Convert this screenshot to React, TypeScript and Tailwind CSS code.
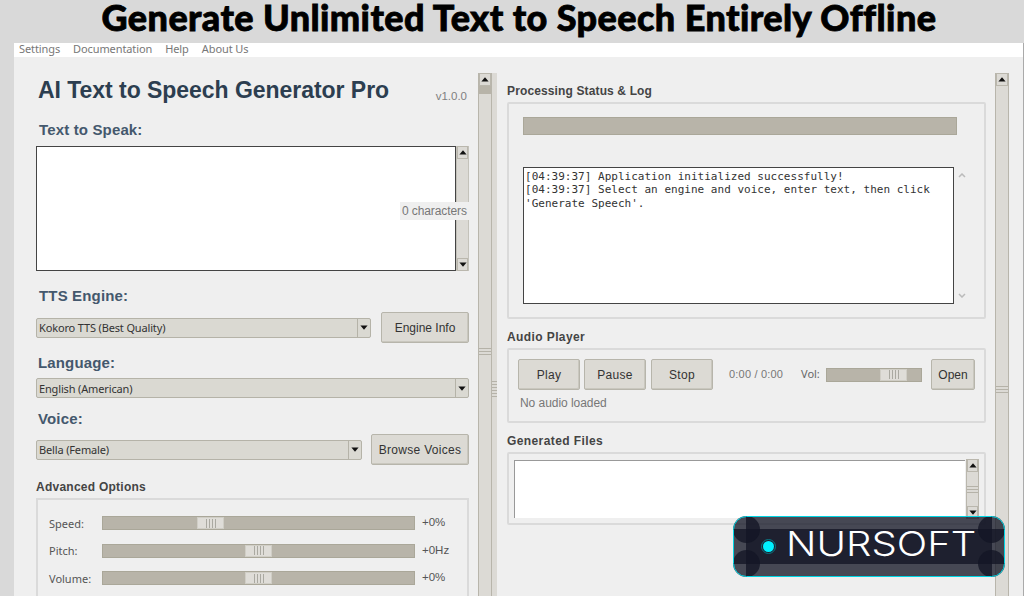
import React from "react";

const ARIAL = "font-['Liberation_Sans',Arial,sans-serif]";
const NOTO = "font-['Noto_Sans','Open_Sans',sans-serif]";

function Arrow({ up = false }: { up?: boolean }) {
  return (
    <svg width="8" height="5" viewBox="0 0 8 5" className={up ? "" : "rotate-180"}>
      <path d="M4 0.3 L7.6 4.5 H0.4 Z" fill="#111" />
    </svg>
  );
}

function ArrowBox({ up = false }: { up?: boolean }) {
  return (
    <div className="flex h-[13px] w-full shrink-0 items-center justify-center border border-[#bab7ad] bg-[#dcdad5]">
      <Arrow up={up} />
    </div>
  );
}

function Grip({ className = "" }: { className?: string }) {
  return (
    <div className={"flex w-full flex-col gap-[2px] " + className}>
      <i className="h-px bg-[#b5b2a8]" />
      <i className="h-px bg-[#b5b2a8]" />
      <i className="h-px bg-[#b5b2a8]" />
    </div>
  );
}

function Combo({ text, className }: { text: string; className: string }) {
  return (
    <div className={"flex h-5 shrink-0 items-stretch rounded-[2px] border border-[#b5b3a8] bg-[#dad9d2] " + className}>
      <div className={"flex flex-1 items-center pl-[2px] text-[11px] leading-none tracking-[-0.15px] whitespace-nowrap text-[#333] " + NOTO}>
        {text}
      </div>
      <div className="flex w-[13px] items-center justify-center border-l border-[#b5b3a8]">
        <Arrow />
      </div>
    </div>
  );
}

function Button({ text, className }: { text: string; className: string }) {
  return (
    <div
      className={
        "flex items-center justify-center rounded-[2px] border border-[#b7b5ab] bg-[#dcdad4] text-[12px] leading-none whitespace-nowrap text-[#333] shadow-[inset_-1px_-1px_0_#c9c7be] " +
        ARIAL + " " + className
      }
    >
      {text}
    </div>
  );
}

function Slider({ className, offset }: { className: string; offset: string }) {
  return (
    <div className={"flex h-[14px] border border-[#aaa799] bg-[#b8b4a9] " + className}>
      <div className={"flex h-3 w-[27px] items-center justify-center gap-[2px] border border-[#d0cec6] bg-[#dfddd8] " + offset}>
        <i className="h-[9px] w-px bg-[#aaa9a1]" />
        <i className="h-[9px] w-px bg-[#aaa9a1]" />
        <i className="h-[9px] w-px bg-[#aaa9a1]" />
        <i className="h-[9px] w-px bg-[#aaa9a1]" />
      </div>
    </div>
  );
}

function Heading({ text, className }: { text: string; className: string }) {
  return (
    <div className={"h-5 shrink-0 text-[15px] leading-5 font-bold tracking-[0.15px] whitespace-nowrap text-[#44586d] " + ARIAL + " " + className}>
      {text}
    </div>
  );
}

function Section({ text, className }: { text: string; className: string }) {
  return <div className={"h-4 shrink-0 text-[12px] leading-4 font-bold whitespace-nowrap text-[#444] " + ARIAL + " " + className}>{text}</div>;
}

function Option({ label, value, offset }: { label: string; value: string; offset: string }) {
  return (
    <div className={"flex h-[14px] shrink-0 items-center text-[11px] leading-none text-[#555] " + NOTO}>
      <span className="w-[53px]">{label}</span>
      <Slider className="w-[313px]" offset={offset} />
      <span className={"ml-[7px] text-[11.5px] " + ARIAL}>{value}</span>
    </div>
  );
}

function Brand() {
  return (
    <div className="absolute top-[516px] left-[733px] h-[61px] w-[272px]">
      <svg width="272" height="61" viewBox="0 0 272 61" className="absolute inset-0">
        <g fill="#121525" fillOpacity="0.77">
          <rect x="13" width="246" height="61" />
          <rect y="13" width="272" height="35" />
          <circle cx="13.5" cy="13.5" r="13.5" />
          <circle cx="13.5" cy="47.5" r="13.5" />
          <circle cx="258.5" cy="13.5" r="13.5" />
          <circle cx="258.5" cy="47.5" r="13.5" />
        </g>
        <rect x="0.5" y="0.5" width="271" height="60" rx="13" fill="none" stroke="#00d5e4" />
        <circle cx="35.5" cy="30.5" r="7" fill="none" stroke="#0b7784" />
        <circle cx="35.5" cy="30.5" r="5.5" fill="#00f0ff" />
      </svg>
      <span className="absolute top-[9px] left-[53px] origin-left scale-x-[1.18] font-['Inter',sans-serif] text-[34px] leading-[38px] font-light whitespace-nowrap text-white">
        NURSOFT
      </span>
    </div>
  );
}

function LeftPane() {
  return (
    <div className="flex w-[464px] shrink-0 flex-col overflow-hidden pl-[22px]">
      <div className="mt-[16px] flex h-[34px] shrink-0 items-center justify-between pr-[11px] pl-[2px]">
        <h1 className={"text-[23px] leading-none font-bold tracking-[-0.04px] whitespace-nowrap text-[#2c3e50] " + ARIAL}>
          AI Text to Speech Generator Pro
        </h1>
        <span className={"mt-[14px] text-[11.5px] text-[#7f7f7f] " + ARIAL}>v1.0.0</span>
      </div>
      <Heading text="Text to Speak:" className="mt-[13px] ml-[3px]" />
      <div className="relative mt-[6px] flex h-[125px] w-[433px] shrink-0">
        <div className="w-[420px] border border-[#444] bg-white" />
        <div className="flex flex-1 flex-col justify-between border-x border-[#c4c2ba] bg-[#dcdad5]">
          <ArrowBox up />
          <ArrowBox />
        </div>
        <span className={"absolute top-[56px] right-0 h-[18px] w-[69px] bg-[#efefef] pl-[2px] text-[12px] leading-[18px] tracking-[-0.1px] whitespace-nowrap text-[#777] " + ARIAL}>
          0 characters
        </span>
      </div>
      <Heading text="TTS Engine:" className="mt-[15px] ml-[3px]" />
      <div className="mt-[6px] flex h-[31px] w-[433px] shrink-0 items-center justify-between">
        <Combo text="Kokoro TTS (Best Quality)" className="w-[335px]" />
        <Button text="Engine Info" className="h-[31px] w-[88px]" />
      </div>
      <Heading text="Language:" className="mt-[10px] ml-[2px]" />
      <Combo text="English (American)" className="mt-[5px] w-[433px]" />
      <Heading text="Voice:" className="mt-[11px] ml-[2px]" />
      <div className="mt-[5px] flex h-[31px] w-[433px] shrink-0 items-center justify-between">
        <Combo text="Bella (Female)" className="w-[326px]" />
        <Button text="Browse Voices" className="h-[31px] w-[98px] tracking-[0.3px]" />
      </div>
      <Section text="Advanced Options" className="mt-[14px] tracking-[0.25px]" />
      <div className="mt-[3px] flex h-[120px] w-[433px] shrink-0 flex-col gap-[13.5px] border-2 border-[#dadada] pt-[16px] pl-[11px]">
        <Option label="Speed:" value="+0%" offset="ml-[94px]" />
        <Option label="Pitch:" value="+0Hz" offset="ml-[142px]" />
        <Option label="Volume:" value="+0%" offset="ml-[142px]" />
      </div>
    </div>
  );
}

function RightPane() {
  return (
    <div className="flex w-[498px] shrink-0 flex-col pl-[10px]">
      <Section text="Processing Status & Log" className="mt-[26px] tracking-[0.13px]" />
      <div className="mt-[3px] flex h-[217px] w-[479px] flex-col rounded-[2px] border-2 border-[#dadada] pl-[14px]">
        <div className="mt-[13px] h-[18px] w-[434px] border border-[#aaa799] bg-[#b8b4a9]" />
        <div className="mt-[32px] flex h-[137px]">
          <div className="w-[431px] border border-[#444] bg-white pt-[2px] pl-px font-['DejaVu_Sans_Mono',monospace] text-[11px] leading-[13.4px] tracking-[0.015px] whitespace-pre text-[#333]">
            <p>[04:39:37] Application initialized successfully!</p>
            <p>[04:39:37] Select an engine and voice, enter text, then click</p>
            <p>'Generate Speech'.</p>
          </div>
          <div className="ml-[4px] flex flex-col justify-between py-[6px]">
            <svg width="8" height="5" viewBox="0 0 8 5"><path d="M1 4 L4 1 L7 4" fill="none" stroke="#bbb" strokeWidth="1.5" /></svg>
            <svg width="8" height="5" viewBox="0 0 8 5"><path d="M1 1 L4 4 L7 1" fill="none" stroke="#bbb" strokeWidth="1.5" /></svg>
          </div>
        </div>
      </div>
      <Section text="Audio Player" className="mt-[10px] tracking-[0.4px]" />
      <div className="mt-[3px] flex h-[75px] w-[479px] flex-col rounded-[2px] border-2 border-[#dadada] pt-[9px] pl-[9px]">
        <div className="flex h-[31px] items-center">
          <Button text="Play" className="h-[31px] w-[62px] tracking-[0.3px]" />
          <Button text="Pause" className="ml-[4px] h-[31px] w-[62px] tracking-[0.3px]" />
          <Button text="Stop" className="ml-[5px] h-[31px] w-[62px] tracking-[0.3px]" />
          <span className={"ml-[16px] w-[72px] text-[11px] tracking-[0.2px] text-[#777] " + ARIAL}>0:00 / 0:00</span>
          <span className={"w-[25px] text-[11px] text-[#666] " + NOTO}>Vol:</span>
          <Slider className="w-[96px]" offset="ml-[53px]" />
          <Button text="Open" className="ml-[9px] h-[31px] w-[44px]" />
        </div>
        <span className={"mt-[5px] ml-[2px] text-[12px] leading-4 tracking-[-0.05px] text-[#777] " + ARIAL}>No audio loaded</span>
      </div>
      <Section text="Generated Files" className="mt-[10px] tracking-[0.4px]" />
      <div className="mt-[3px] flex h-[73px] w-[479px] rounded-[2px] border-2 border-[#dadada] pt-[5px] pl-[5px]">
        <div className="mt-px h-[58px] w-[451px] border-t border-l border-[#999] bg-white" />
        <div className="ml-px flex h-[60px] w-[13px] flex-col items-center justify-between border-x border-[#bab7ad] bg-[#dcdad5]">
          <ArrowBox up />
          <Grip />
          <ArrowBox />
        </div>
      </div>
    </div>
  );
}

export default function App() {
  return (
    <div className="relative flex h-[596px] w-[1024px] flex-col overflow-hidden bg-[#d9d9d9]">
      <header className="flex h-[43px] shrink-0 justify-center pl-[14px]">
        <span className="-mt-px font-['Lato',sans-serif] text-[36px] leading-[36px] font-black tracking-[0.42px] whitespace-nowrap text-black [-webkit-text-stroke:0.8px_#000]">
          Generate Unlimited Text to Speech Entirely Offline
        </span>
      </header>
      <div className="ml-[14px] flex w-[1010px] flex-1 flex-col border-r border-[#aaa] bg-[#efefef]">
        <nav className={"flex h-[14px] shrink-0 items-center gap-[13px] bg-white pb-[3px] pl-[5px] text-[11px] leading-none tracking-[-0.1px] text-[#777] " + NOTO}>
          <span>Settings</span>
          <span>Documentation</span>
          <span>Help</span>
          <span>About Us</span>
        </nav>
        <main className="flex h-[539px]">
          <LeftPane />
          <div className="mt-[16px] flex w-[14px] shrink-0 flex-col border-x border-[#b8b5ab] bg-[#dcdad5]">
            <ArrowBox up />
            <div className="h-[8px] bg-[#b8b4a9]" />
            <Grip className="mt-[254px]" />
          </div>
          <div className="mt-[16px] w-[5px] shrink-0 bg-[#dcdad5]">
            <div className="mt-[308px] flex flex-col gap-[2px]">
              {[0, 1, 2, 3, 4, 5].map((i) => <i key={i} className="h-px bg-[#b5b2a8]" />)}
            </div>
          </div>
          <RightPane />
          <div className="mt-[16px] flex w-[14px] shrink-0 flex-col border-x border-[#b8b5ab] bg-[#dcdad5]">
            <ArrowBox up />
            <Grip className="mt-[300px]" />
          </div>
        </main>
      </div>
      <Brand />
    </div>
  );
}
